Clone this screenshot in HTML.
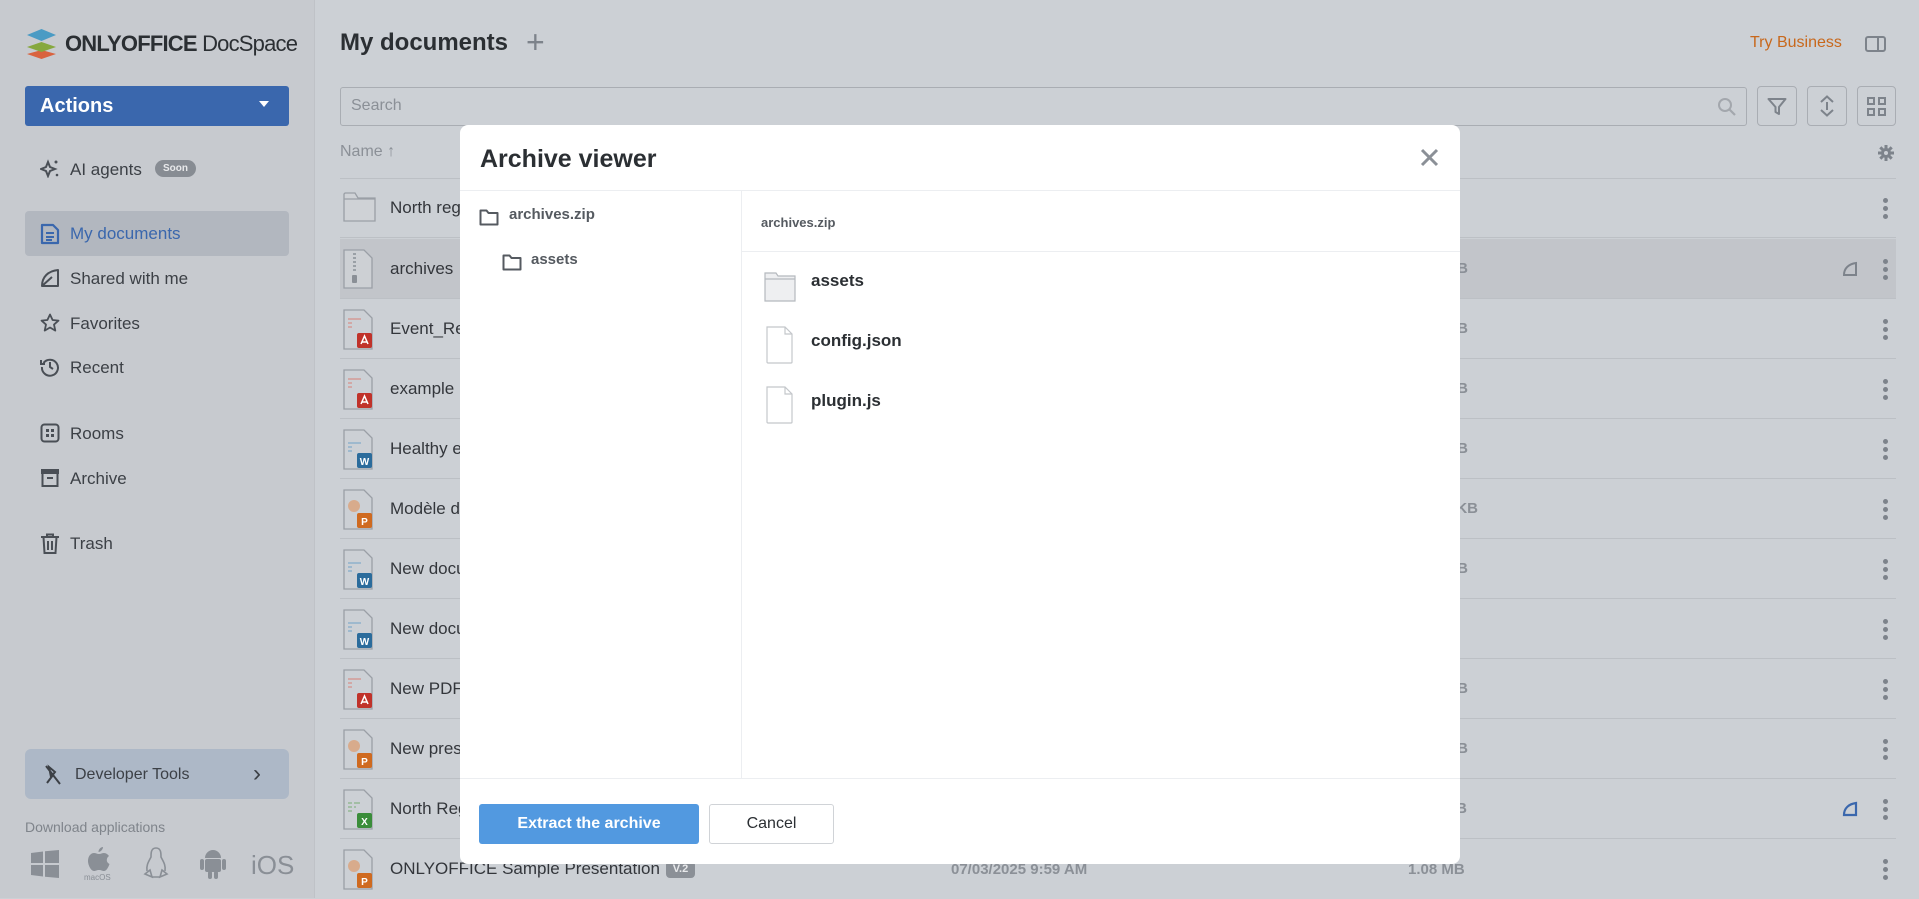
<!DOCTYPE html>
<html><head><meta charset="utf-8">
<style>
*{margin:0;padding:0;box-sizing:border-box}
body{width:1919px;height:898px;overflow:hidden;position:relative;background:#ccd0d5;font-family:"Liberation Sans",sans-serif;color:#33363b}
.a{position:absolute;white-space:nowrap}
#side{position:absolute;left:0;top:0;width:315px;height:898px;background:#c7cacf;border-right:1px solid #bfc2c7}
.nav{position:absolute;left:70px;font-size:17px;color:#3c4046;margin-top:2px}
.nico{position:absolute;left:40px}
.row{position:absolute;left:340px;width:1556px;height:60px;border-bottom:1px solid #bcc0c5}
.row .nm{position:absolute;left:50px;top:20px;font-size:17px;color:#33363b}
.row .ic{position:absolute;left:3px;top:10px}
.dots{position:absolute;left:1543px;top:20px;width:5px}
.dots i{display:block;width:5px;height:5px;border-radius:50%;background:#7d838b;margin-bottom:3px}
.sz{position:absolute;left:1000px;width:128px;text-align:right;top:21px;font-size:15px;color:#8b9097;font-weight:bold}
#modal{position:absolute;left:460px;top:125px;width:1000px;height:739px;background:#fff;border-radius:8px;overflow:hidden}
</style></head><body>
<div id="side">
  <svg class="a" style="left:25px;top:28px" width="33" height="32" viewBox="0 0 33 32">
    <path d="M16.5 22 L2 26 L16.5 31 L31 26Z" fill="#d9633f"/>
    <path d="M16.5 14 L2 19 L16.5 24 L31 19Z" fill="#86a83e"/>
    <path d="M16.5 1 L2 7 L16.5 13 L31 7Z" fill="#4a9bc4"/>
  </svg>
  <div class="a" style="left:65px;top:31px;font-size:22px;color:#2b2f33;letter-spacing:-0.8px"><b>ONLYOFFICE</b> DocSpace</div>
  <div class="a" style="left:25px;top:86px;width:264px;height:40px;background:#3a67ad;border-radius:3px">
    <div class="a" style="left:15px;top:9px;font-size:20px;font-weight:bold;color:#fff">Actions</div>
    <div class="a" style="left:234px;top:15px;width:0;height:0;border-left:5px solid transparent;border-right:5px solid transparent;border-top:6px solid #fff"></div>
  </div>
  <svg class="nico" style="top:158px" width="20" height="20" viewBox="0 0 20 20"><path d="M8 4 L10 9 L15 11 L10 13 L8 18 L6 13 L1 11 L6 9Z" fill="none" stroke="#4a4f56" stroke-width="2"/><circle cx="16" cy="4" r="1.5" fill="#4a4f56"/><circle cx="17" cy="17" r="1.3" fill="#4a4f56"/></svg>
  <div class="nav" style="top:158px">AI agents</div>
  <div class="a" style="left:155px;top:160px;width:41px;height:17px;border-radius:9px;background:#878c93;color:#e8e9eb;font-size:10px;font-weight:bold;text-align:center;line-height:17px">Soon</div>
  <div class="a" style="left:25px;top:211px;width:264px;height:45px;background:#b2b7bf;border-radius:4px"></div>
  <svg class="nico" style="top:223px" width="20" height="22" viewBox="0 0 20 22"><path d="M2 2 H13 L18 7 V20 H2Z" fill="none" stroke="#3a67ad" stroke-width="2.2" stroke-linejoin="round"/><path d="M6 10 H14 M6 14 H14 M6 17 H12" stroke="#3a67ad" stroke-width="2"/></svg>
  <div class="nav" style="top:222px;color:#3a67ad">My documents</div>
  <svg class="nico" style="top:268px" width="20" height="20" viewBox="0 0 20 20"><path d="M2 18 C2 9 8 3 18 2 L18 18Z M2 18 L12 9" fill="none" stroke="#4a4f56" stroke-width="2" stroke-linejoin="round"/></svg>
  <div class="nav" style="top:267px">Shared with me</div>
  <svg class="nico" style="top:313px" width="20" height="20" viewBox="0 0 20 20"><path d="M10 1.5 L12.6 7 L18.5 7.6 L14 11.6 L15.3 17.6 L10 14.5 L4.7 17.6 L6 11.6 L1.5 7.6 L7.4 7Z" fill="none" stroke="#4a4f56" stroke-width="1.8" stroke-linejoin="round"/></svg>
  <div class="nav" style="top:312px">Favorites</div>
  <svg class="nico" style="top:357px" width="20" height="20" viewBox="0 0 20 20"><path d="M3.5 6 A8 8 0 1 1 2 10" fill="none" stroke="#4a4f56" stroke-width="2"/><path d="M1 3 V7 H5" fill="none" stroke="#4a4f56" stroke-width="2"/><path d="M10 5 V10 L13 12" fill="none" stroke="#4a4f56" stroke-width="2"/></svg>
  <div class="nav" style="top:356px">Recent</div>
  <svg class="nico" style="top:423px" width="20" height="20" viewBox="0 0 20 20"><rect x="1.5" y="1.5" width="17" height="17" rx="3" fill="none" stroke="#4a4f56" stroke-width="2"/><rect x="6" y="6" width="3" height="3" fill="#4a4f56"/><rect x="11" y="6" width="3" height="3" fill="#4a4f56"/><rect x="6" y="11" width="3" height="3" fill="#4a4f56"/><rect x="11" y="11" width="3" height="3" fill="#4a4f56"/></svg>
  <div class="nav" style="top:422px">Rooms</div>
  <svg class="nico" style="top:468px" width="20" height="20" viewBox="0 0 20 20"><rect x="1" y="1" width="18" height="5" fill="#4a4f56"/><path d="M2.5 6 V18 H17.5 V6" fill="none" stroke="#4a4f56" stroke-width="2"/><path d="M7 10 H13" stroke="#4a4f56" stroke-width="2"/></svg>
  <div class="nav" style="top:467px">Archive</div>
  <svg class="nico" style="top:533px" width="20" height="22" viewBox="0 0 20 22"><path d="M1 4 H19 M7 4 V1.5 H13 V4 M3.5 4 L4.5 20 H15.5 L16.5 4 M8 8 V17 M12 8 V17" fill="none" stroke="#4a4f56" stroke-width="2"/></svg>
  <div class="nav" style="top:532px">Trash</div>
  <div class="a" style="left:25px;top:749px;width:264px;height:50px;background:#adb8c7;border-radius:6px">
    <svg class="a" style="left:18px;top:15px" width="20" height="22" viewBox="0 0 20 22"><path d="M3 2 L17 20 M6 3 L12 8 L8 13 Z M10 11 L4 19" fill="none" stroke="#3c4046" stroke-width="2"/></svg>
    <div class="a" style="left:50px;top:17px;font-size:16px;color:#3c4046">Developer Tools</div>
    <div class="a" style="left:228px;top:11px;font-size:24px;color:#3c4046">&#x203A;</div>
  </div>
  <div class="a" style="left:25px;top:819px;font-size:14px;color:#7f848b">Download applications</div>
  <svg class="a" style="left:31px;top:850px" width="28" height="28" viewBox="0 0 28 28"><path d="M0 3 L12 1.5 V13 H0Z M14 1.2 L28 0 V13 H14Z M0 15 H12 V26.5 L0 25Z M14 15 H28 V28 L14 26.8Z" fill="#8a8f96"/></svg>
  <svg class="a" style="left:87px;top:846px" width="24" height="26" viewBox="0 0 24 26"><path d="M16 1 C16 4 13 6 11.5 6 C11.5 3 14 1 16 1Z M12 8 C14 8 15 7 17 7 C19 7 21 8.5 22 10 C19 12 19 16.5 22.5 18 C21.5 21 19.5 25 17 25 C15 25 14.5 24 12 24 C9.5 24 9 25 7 25 C4 25 1 19 1 15 C1 10 4 7 7 7 C9 7 10 8 12 8Z" fill="#8a8f96"/></svg>
  <div class="a" style="left:84px;top:873px;font-size:8px;color:#8a8f96">macOS</div>
  <svg class="a" style="left:143px;top:846px" width="26" height="34" viewBox="0 0 26 34"><path d="M13 2 C8 2 8 7 8 11 C6 15 3 19 4 25 M13 2 C18 2 18 7 18 11 C20 15 23 19 22 25" fill="none" stroke="#8a8f96" stroke-width="1.6"/><path d="M2 28 L7 24 L9 31 Z M24 28 L19 24 L17 31Z M9 31 H17" fill="none" stroke="#8a8f96" stroke-width="1.6"/></svg>
  <svg class="a" style="left:199px;top:848px" width="28" height="32" viewBox="0 0 28 32"><path d="M6 10 A8 8 0 0 1 22 10Z" fill="#8a8f96"/><rect x="6" y="11" width="16" height="13" rx="2" fill="#8a8f96"/><rect x="1" y="11" width="4" height="11" rx="2" fill="#8a8f96"/><rect x="23" y="11" width="4" height="11" rx="2" fill="#8a8f96"/><rect x="9" y="23" width="4" height="8" rx="2" fill="#8a8f96"/><rect x="15" y="23" width="4" height="8" rx="2" fill="#8a8f96"/></svg>
  <div class="a" style="left:251px;top:850px;font-size:26px;color:#8a8f96">iOS</div>
</div>

<div class="a" style="left:340px;top:29px;font-size:24px;font-weight:bold;color:#2b2f33">My documents</div>
<div class="a" style="left:526px;top:24px;font-size:32px;color:#7d838b">+</div>
<div class="a" style="left:1750px;top:34px;font-size:16px;color:#c8681c">Try Business</div>
<svg class="a" style="left:1865px;top:36px" width="21" height="16" viewBox="0 0 21 16"><rect x="1" y="1" width="19" height="14" rx="2" fill="none" stroke="#7d838b" stroke-width="2"/><path d="M13 1 V15" stroke="#7d838b" stroke-width="2"/></svg>
<div class="a" style="left:340px;top:87px;width:1407px;height:39px;border:1px solid #a9adb3;border-radius:3px"></div>
<div class="a" style="left:351px;top:97px;font-size:16px;color:#8b9097">Search</div>
<svg class="a" style="left:1717px;top:97px" width="20" height="20" viewBox="0 0 20 20"><circle cx="8" cy="8" r="6" fill="none" stroke="#a3a7ad" stroke-width="2"/><path d="M12.5 12.5 L18 18" stroke="#a3a7ad" stroke-width="2.2"/></svg>
<div class="a" style="left:1757px;top:86px;width:40px;height:40px;border:1px solid #a9adb3;border-radius:4px"></div>
<svg class="a" style="left:1767px;top:97px" width="20" height="19" viewBox="0 0 20 19"><path d="M1.5 2 H18.5 L12 10 V17 L8.5 15 V10Z" fill="none" stroke="#7d838b" stroke-width="2" stroke-linejoin="round"/></svg>
<div class="a" style="left:1807px;top:86px;width:40px;height:40px;border:1px solid #a9adb3;border-radius:4px"></div>
<svg class="a" style="left:1818px;top:95px" width="18" height="22" viewBox="0 0 18 22"><path d="M3 7 L9 1.5 L15 7 M3 15 L9 20.5 L15 15 M9 7 V15" fill="none" stroke="#7d838b" stroke-width="2"/></svg>
<div class="a" style="left:1857px;top:86px;width:39px;height:40px;border:1px solid #a9adb3;border-radius:4px"></div>
<svg class="a" style="left:1867px;top:97px" width="19" height="19" viewBox="0 0 19 19"><g fill="none" stroke="#7d838b" stroke-width="2"><rect x="1" y="1" width="6" height="6"/><rect x="12" y="1" width="6" height="6"/><rect x="1" y="12" width="6" height="6"/><rect x="12" y="12" width="6" height="6"/></g></svg>
<div class="a" style="left:340px;top:143px;font-size:16px;color:#8b9097">Name &#x2191;</div>
<svg class="a" style="left:1878px;top:145px" width="16" height="16" viewBox="0 0 16 16"><circle cx="8" cy="8" r="5" fill="#7d838b"/><g stroke="#7d838b" stroke-width="3"><path d="M8 0 V16 M0 8 H16 M2.3 2.3 L13.7 13.7 M13.7 2.3 L2.3 13.7"/></g><circle cx="8" cy="8" r="2" fill="#ccd0d5"/></svg>
<div class="a" style="left:340px;top:178px;width:1556px;height:1px;background:#bcc0c5"></div>

<div class="row" style="top:178px"><svg class="ic" style="top:12px" width="33" height="32" viewBox="0 0 33 32"><path d="M1 4 V31 H32 V8 H15 L12 3 H2Z" fill="#cfd2d6" stroke="#9a9fa6" stroke-width="1.3"/><path d="M1 9 H32" stroke="#9a9fa6" stroke-width="1.3"/></svg><div class="nm">North region</div><div class="dots"><i></i><i></i><i></i></div></div>
<div class="row" style="top:239px;background:#c2c5ca"><svg class="ic" width="30" height="40" viewBox="0 0 30 40"><path d="M1 1 H21 L29 9 V39 H1Z" fill="#cdd0d4" stroke="#9a9fa6" stroke-width="1.3"/><path d="M10 5 h3 M10 9 h3 M10 13 h3 M10 17 h3 M10 21 h3" stroke="#8a8f96" stroke-width="1.5"/><rect x="9" y="26" width="5" height="8" rx="1" fill="#8a8f96"/></svg><div class="nm">archives</div><div class="sz">1.2 KB</div>
<svg class="a" style="left:1502px;top:22px" width="16" height="16" viewBox="0 0 16 16"><path d="M2 14 C2 7 7 3 14 2 V14Z" fill="none" stroke="#7d838b" stroke-width="2"/></svg><div class="dots"><i></i><i></i><i></i></div></div>

<div class="row" style="top:299px"><svg class="ic" width="30" height="42" viewBox="0 0 30 42"><path d="M1 1 H21 L29 9 V40 H1Z" fill="#ccd0d5" stroke="#9a9fa6" stroke-width="1.3"/><path d="M5 10 h13 M5 14 h4 M5 18 h4" stroke="#d49a96" stroke-width="1.5"/><rect x="14" y="24" width="15" height="15" rx="2" fill="#c0322a"/><path d="M18 35 L21.5 27 L25 35 M19 33 H24" stroke="#fff" stroke-width="1.5" fill="none"/></svg><div class="nm">Event_Report</div><div class="sz">1.2 MB</div><div class="dots"><i></i><i></i><i></i></div></div>
<div class="row" style="top:359px"><svg class="ic" width="30" height="42" viewBox="0 0 30 42"><path d="M1 1 H21 L29 9 V40 H1Z" fill="#ccd0d5" stroke="#9a9fa6" stroke-width="1.3"/><path d="M5 10 h13 M5 14 h4 M5 18 h4" stroke="#d49a96" stroke-width="1.5"/><rect x="14" y="24" width="15" height="15" rx="2" fill="#c0322a"/><path d="M18 35 L21.5 27 L25 35 M19 33 H24" stroke="#fff" stroke-width="1.5" fill="none"/></svg><div class="nm">example</div><div class="sz">1.2 MB</div><div class="dots"><i></i><i></i><i></i></div></div>
<div class="row" style="top:419px"><svg class="ic" width="30" height="42" viewBox="0 0 30 42"><path d="M1 1 H21 L29 9 V40 H1Z" fill="#ccd0d5" stroke="#9a9fa6" stroke-width="1.3"/><path d="M5 14 h13 M5 18 h4 M5 22 h4" stroke="#8fb1cb" stroke-width="1.5"/><rect x="14" y="24" width="15" height="15" rx="2" fill="#2b6c9c"/><text x="21.5" y="36" font-size="10" font-weight="bold" fill="#fff" text-anchor="middle" font-family="Liberation Sans">W</text></svg><div class="nm">Healthy eating</div><div class="sz">1.2 MB</div><div class="dots"><i></i><i></i><i></i></div></div>
<div class="row" style="top:479px"><svg class="ic" width="30" height="42" viewBox="0 0 30 42"><path d="M1 1 H21 L29 9 V40 H1Z" fill="#ccd0d5" stroke="#9a9fa6" stroke-width="1.3"/><circle cx="11" cy="17" r="6" fill="#d8ab8c"/><rect x="14" y="24" width="15" height="15" rx="2" fill="#cf6a20"/><text x="21.5" y="36" font-size="10" font-weight="bold" fill="#fff" text-anchor="middle" font-family="Liberation Sans">P</text></svg><div class="nm">Modèle de</div><div class="sz" style="width:138px">12 KB</div><div class="dots"><i></i><i></i><i></i></div></div>
<div class="row" style="top:539px"><svg class="ic" width="30" height="42" viewBox="0 0 30 42"><path d="M1 1 H21 L29 9 V40 H1Z" fill="#ccd0d5" stroke="#9a9fa6" stroke-width="1.3"/><path d="M5 14 h13 M5 18 h4 M5 22 h4" stroke="#8fb1cb" stroke-width="1.5"/><rect x="14" y="24" width="15" height="15" rx="2" fill="#2b6c9c"/><text x="21.5" y="36" font-size="10" font-weight="bold" fill="#fff" text-anchor="middle" font-family="Liberation Sans">W</text></svg><div class="nm">New document</div><div class="sz">1.2 MB</div><div class="dots"><i></i><i></i><i></i></div></div>
<div class="row" style="top:599px"><svg class="ic" width="30" height="42" viewBox="0 0 30 42"><path d="M1 1 H21 L29 9 V40 H1Z" fill="#ccd0d5" stroke="#9a9fa6" stroke-width="1.3"/><path d="M5 14 h13 M5 18 h4 M5 22 h4" stroke="#8fb1cb" stroke-width="1.5"/><rect x="14" y="24" width="15" height="15" rx="2" fill="#2b6c9c"/><text x="21.5" y="36" font-size="10" font-weight="bold" fill="#fff" text-anchor="middle" font-family="Liberation Sans">W</text></svg><div class="nm">New document</div><div class="sz" style="width:117px">1.2 MB</div><div class="dots"><i></i><i></i><i></i></div></div>
<div class="row" style="top:659px"><svg class="ic" width="30" height="42" viewBox="0 0 30 42"><path d="M1 1 H21 L29 9 V40 H1Z" fill="#ccd0d5" stroke="#9a9fa6" stroke-width="1.3"/><path d="M5 10 h13 M5 14 h4 M5 18 h4" stroke="#d49a96" stroke-width="1.5"/><rect x="14" y="24" width="15" height="15" rx="2" fill="#c0322a"/><path d="M18 35 L21.5 27 L25 35 M19 33 H24" stroke="#fff" stroke-width="1.5" fill="none"/></svg><div class="nm">New PDF form</div><div class="sz">1.2 MB</div><div class="dots"><i></i><i></i><i></i></div></div>
<div class="row" style="top:719px"><svg class="ic" width="30" height="42" viewBox="0 0 30 42"><path d="M1 1 H21 L29 9 V40 H1Z" fill="#ccd0d5" stroke="#9a9fa6" stroke-width="1.3"/><circle cx="11" cy="17" r="6" fill="#d8ab8c"/><rect x="14" y="24" width="15" height="15" rx="2" fill="#cf6a20"/><text x="21.5" y="36" font-size="10" font-weight="bold" fill="#fff" text-anchor="middle" font-family="Liberation Sans">P</text></svg><div class="nm">New presentation</div><div class="sz">1.2 MB</div><div class="dots"><i></i><i></i><i></i></div></div>
<div class="row" style="top:779px"><svg class="ic" width="30" height="42" viewBox="0 0 30 42"><path d="M1 1 H21 L29 9 V40 H1Z" fill="#ccd0d5" stroke="#9a9fa6" stroke-width="1.3"/><path d="M5 14 h4 M11 14 h6 M5 18 h4 M11 18 h2 M5 22 h4" stroke="#93b893" stroke-width="1.5"/><rect x="14" y="24" width="15" height="15" rx="2" fill="#3a8d3a"/><text x="21.5" y="36" font-size="10" font-weight="bold" fill="#fff" text-anchor="middle" font-family="Liberation Sans">X</text></svg><div class="nm">North Region</div><div class="sz" style="width:127px">1.2 KB</div>
<svg class="a" style="left:1502px;top:22px" width="16" height="16" viewBox="0 0 16 16"><path d="M2 14 C2 7 7 3 14 2 V14Z" fill="none" stroke="#3a67ad" stroke-width="2.2"/></svg><div class="dots"><i></i><i></i><i></i></div></div>
<div class="row" style="top:839px;border-bottom:none"><svg class="ic" width="30" height="42" viewBox="0 0 30 42"><path d="M1 1 H21 L29 9 V40 H1Z" fill="#ccd0d5" stroke="#9a9fa6" stroke-width="1.3"/><circle cx="11" cy="17" r="6" fill="#d8ab8c"/><rect x="14" y="24" width="15" height="15" rx="2" fill="#cf6a20"/><text x="21.5" y="36" font-size="10" font-weight="bold" fill="#fff" text-anchor="middle" font-family="Liberation Sans">P</text></svg><div class="nm">ONLYOFFICE Sample Presentation</div>
<div class="a" style="left:326px;top:22px;width:29px;height:17px;border-radius:4px;background:#8b9097;color:#e8e9eb;font-size:11px;font-weight:bold;text-align:center;line-height:17px">V.2</div>
<div class="a" style="left:611px;top:22px;font-size:15px;color:#8b9097;font-weight:bold">07/03/2025 9:59 AM</div>
<div class="a" style="left:1068px;top:22px;font-size:15px;color:#8b9097;font-weight:bold">1.08 MB</div>
<div class="dots"><i></i><i></i><i></i></div></div>

<div id="modal">
  <div class="a" style="left:20px;top:20px;font-size:25px;font-weight:bold;color:#2b2f33">Archive viewer</div>
  <svg class="a" style="left:960px;top:23px" width="19" height="19" viewBox="0 0 19 19"><path d="M2 2 L17 17 M17 2 L2 17" stroke="#8b9097" stroke-width="3"/></svg>
  <div class="a" style="left:0;top:65px;width:1000px;height:1px;background:#eceef1"></div>
  <div class="a" style="left:281px;top:66px;width:1px;height:587px;background:#eceef1"></div>
  <svg class="a" style="left:19px;top:84px" width="20" height="17" viewBox="0 0 20 17"><path d="M1.5 1.5 H7.5 L9.5 4 H18.5 V15.5 H1.5Z" fill="none" stroke="#555a60" stroke-width="2" stroke-linejoin="round"/></svg>
  <div class="a" style="left:49px;top:81px;font-size:15px;font-weight:bold;color:#555a60">archives.zip</div>
  <svg class="a" style="left:42px;top:129px" width="20" height="17" viewBox="0 0 20 17"><path d="M1.5 1.5 H7.5 L9.5 4 H18.5 V15.5 H1.5Z" fill="none" stroke="#555a60" stroke-width="2" stroke-linejoin="round"/></svg>
  <div class="a" style="left:71px;top:126px;font-size:15px;font-weight:bold;color:#555a60">assets</div>
  <div class="a" style="left:301px;top:90px;font-size:13px;font-weight:bold;color:#555a60">archives.zip</div>
  <div class="a" style="left:282px;top:126px;width:718px;height:1px;background:#eceef1"></div>
  <svg class="a" style="left:304px;top:146px" width="32" height="31" viewBox="0 0 32 31"><path d="M1 2 H12 L14 5 H31 V30 H1Z" fill="#eeeff1" stroke="#b5b9be" stroke-width="1.2"/><path d="M1 8 H31" stroke="#b5b9be" stroke-width="1.2"/></svg>
  <div class="a" style="left:351px;top:146px;font-size:17px;font-weight:bold;color:#2b2f33">assets</div>
  <svg class="a" style="left:306px;top:201px" width="27" height="38" viewBox="0 0 27 38"><path d="M1 1 H19 L26 8 V36 A1 1 0 0 1 25 37 H2 A1 1 0 0 1 1 36Z" fill="#fff" stroke="#c4c7cb" stroke-width="1.2"/><path d="M19 1 V8 H26" fill="none" stroke="#c4c7cb" stroke-width="1.2"/></svg>
  <div class="a" style="left:351px;top:206px;font-size:17px;font-weight:bold;color:#2b2f33">config.json</div>
  <svg class="a" style="left:306px;top:261px" width="27" height="38" viewBox="0 0 27 38"><path d="M1 1 H19 L26 8 V36 A1 1 0 0 1 25 37 H2 A1 1 0 0 1 1 36Z" fill="#fff" stroke="#c4c7cb" stroke-width="1.2"/><path d="M19 1 V8 H26" fill="none" stroke="#c4c7cb" stroke-width="1.2"/></svg>
  <div class="a" style="left:351px;top:266px;font-size:17px;font-weight:bold;color:#2b2f33">plugin.js</div>
  <div class="a" style="left:0;top:653px;width:1000px;height:1px;background:#eceef1"></div>
  <div class="a" style="left:19px;top:679px;width:220px;height:40px;background:#5299e0;border-radius:3px;color:#fff;font-size:16px;font-weight:bold;text-align:center;line-height:40px">Extract the archive</div>
  <div class="a" style="left:249px;top:679px;width:125px;height:40px;border:1px solid #d0d3d7;border-radius:3px;color:#2b2f33;font-size:16px;text-align:center;line-height:38px">Cancel</div>
</div>
</body></html>
